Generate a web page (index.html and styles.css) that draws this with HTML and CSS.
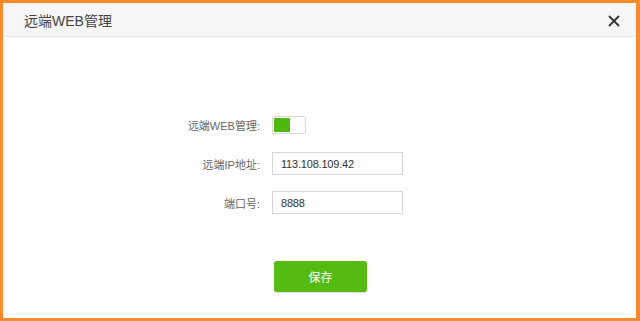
FILE: index.html
```html
<!DOCTYPE html>
<html lang="zh-CN">
<head>
<meta charset="UTF-8">
<title>远端WEB管理</title>
<link rel="stylesheet" href="styles.css">
</head>
<body>
<div class="dialog">
  <div class="dialog-head">
    <span class="dialog-title">远端WEB管理</span>
    <span class="dialog-close">
      <svg width="12" height="12" viewBox="0 0 12 12"><path d="M1 1 L11 11 M11 1 L1 11" stroke="#333" stroke-width="1.8" fill="none"/></svg>
    </span>
  </div>
  <form class="dialog-body">
    <div class="form-row">
      <label class="form-label">远端WEB管理:</label>
      <div class="switch"><span class="switch-on"></span></div>
    </div>
    <div class="form-row">
      <label class="form-label">远端IP地址:</label>
      <input class="text-input" type="text" value="113.108.109.42">
    </div>
    <div class="form-row">
      <label class="form-label">端口号:</label>
      <input class="text-input" type="text" value="8888">
    </div>
    <div class="form-actions">
      <button type="button" class="btn-save">保存</button>
    </div>
  </form>
</div>
</body>
</html>
```

FILE: styles.css
```css
html, body {
  margin: 0;
  padding: 0;
}
body {
  font-family: "Liberation Sans", Arial, "Noto Sans CJK SC", sans-serif;
  background: #fff;
}
.dialog {
  box-sizing: border-box;
  width: 640px;
  height: 321px;
  border-style: solid;
  border-color: #fb8a2c;
  border-width: 3px 4px 3px 3px;
  background: #fff;
}
.dialog-head {
  height: 33px;
  background: #f6f6f6;
  border-bottom: 1px solid #e6e6e6;
  display: flex;
  align-items: center;
  justify-content: space-between;
  padding: 0 16px 0 21px;
}
.dialog-title {
  font-size: 14px;
  color: #444;
}
.dialog-close {
  display: flex;
  margin-top: 2px;
}
.dialog-body {
  padding: 76px 0 0 157px;
}
.form-row {
  display: flex;
  align-items: center;
  height: 23px;
  margin-bottom: 16px;
}
.form-label {
  width: 100px;
  text-align: right;
  font-size: 11px;
  color: #666;
  margin-right: 12px;
}
.switch {
  box-sizing: border-box;
  width: 34px;
  height: 18px;
  border: 1px solid #d9d9d9;
  border-radius: 2px;
  background: #fff;
  padding: 1px;
  display: flex;
}
.switch-on {
  width: 16px;
  background: #4fb80d;
}
.text-input {
  box-sizing: border-box;
  width: 131px;
  height: 23px;
  border: 1px solid #d6d6d6;
  padding: 0 8px;
  font-family: inherit;
  font-size: 11px;
  letter-spacing: -0.2px;
  color: #333;
  outline: none;
}
.form-actions {
  padding: 31px 0 0 114px;
}
.btn-save {
  width: 93px;
  height: 31px;
  border: none;
  border-radius: 3px;
  background: #55ba12;
  color: #fff;
  font-family: inherit;
  font-size: 12px;
  box-shadow: 0 1px 1px rgba(0, 0, 0, 0.15);
  cursor: pointer;
}
```
